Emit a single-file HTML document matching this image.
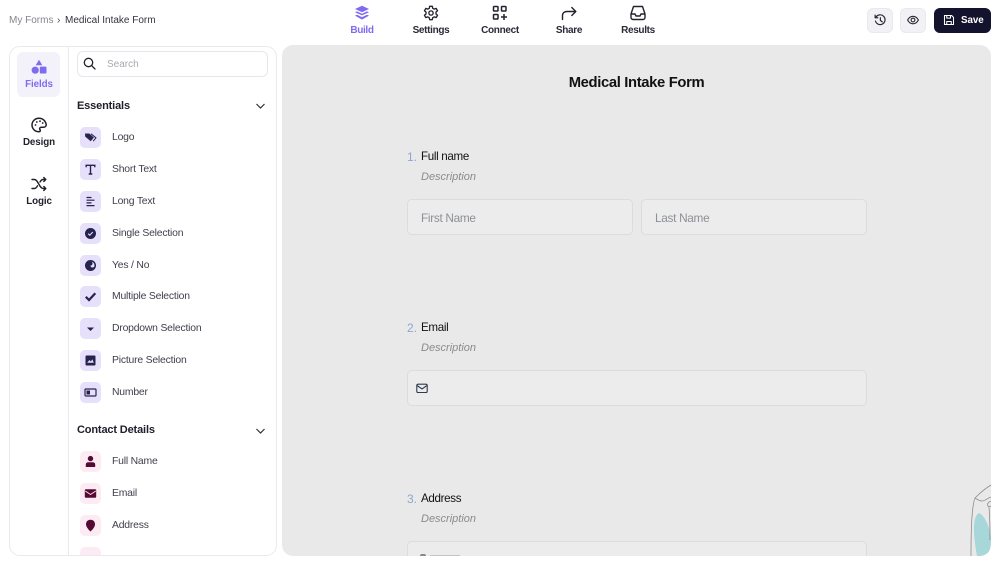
<!DOCTYPE html>
<html><head><meta charset="utf-8">
<style>
*{box-sizing:border-box;margin:0;padding:0}
html,body{width:1000px;height:564px;overflow:hidden;background:#fff;font-family:"Liberation Sans",sans-serif;color:#1f1f2e}
.a{position:absolute}
.t{position:absolute;white-space:nowrap;line-height:14px}
svg{position:absolute;display:block}
.tab{position:absolute;top:25px;font-size:10px;letter-spacing:-.33px;font-weight:700;line-height:12px;width:80px;text-align:center;color:#2a2a38}
.chip{position:absolute;left:80px;width:21px;height:21px;border-radius:5px;background:#e6e0fb}
.chip.p{background:#fdebf3}
.it{position:absolute;left:112px;font-size:10.4px;letter-spacing:-.2px;line-height:14px;color:#40404c;white-space:nowrap}
.form{color:#111;font-size:11.6px;letter-spacing:-.33px;line-height:14px;position:absolute;white-space:nowrap}
.n{color:#8ea6cf;position:absolute;font-size:12px;line-height:14px}
.d{color:#8b8b8b;font-style:italic;font-size:11px;line-height:14px;position:absolute;white-space:nowrap}
.in{position:absolute;background:#ececec;border:1px solid #dcdcdc;border-radius:5px}
.ph{position:absolute;color:#8d9096;font-size:11.8px;letter-spacing:-.3px;line-height:14px;white-space:nowrap}
.side{position:absolute;left:9px;width:60px;text-align:center;white-space:nowrap;line-height:14px;font-size:9.8px;font-weight:700;letter-spacing:-.1px;color:#22222c}
</style></head><body>

<div class="t" style="left:9px;top:13.5px;font-size:10px;color:#85858d">My Forms</div>
<div class="t" style="left:57px;top:13.5px;font-size:10px;color:#44444c">›</div>
<div class="t" style="left:65px;top:13.5px;font-size:10px;color:#33333d">Medical Intake Form</div>

<!-- top tabs -->
<svg style="left:354px;top:5px" width="16" height="16" viewBox="0 0 16 16"><path d="M8 .8 15 4 8 7.2 1 4Z" fill="#7f6bf0"/><path d="M1 7.2 3 6.4 8 8.7 13 6.4 15 7.2 8 10.4Z" fill="#7f6bf0"/><path d="M1 10.6 3 9.8 8 12.1 13 9.8 15 10.6 8 14.6Z" fill="#7f6bf0"/></svg>
<div class="tab" style="left:322px;color:#7f6bf0">Build</div>
<svg style="left:423px;top:5px" width="16" height="16" viewBox="0 0 24 24" fill="none" stroke="#22222c" stroke-width="2"><circle cx="12" cy="12" r="3.2"/><path d="M10 2h4l.6 3 2.4 1.2 2.8-1.1 2 3.5-2.3 1.9v3l2.3 1.9-2 3.5-2.8-1.1L14.600 19l-.6 3h-4l-.6-3L7 17.800l-2.800 1.100-2-3.500 2.300-1.900v-3L2.200 8.600l2-3.500L7 6.200 9.400 5z" stroke-linejoin="round"/></svg>
<div class="tab" style="left:391px">Settings</div>
<svg style="left:492px;top:5px" width="16" height="16" viewBox="0 0 16 16" fill="none" stroke="#22222c" stroke-width="1.500"><rect x="1.500" y="1.500" width="4.500" height="4.500" rx=".8"/><rect x="9.500" y="1.500" width="4.500" height="4.500" rx=".8"/><rect x="1.500" y="9.500" width="4.500" height="4.500" rx=".8"/><path d="M12 9v6M9 12h6"/></svg>
<div class="tab" style="left:460px">Connect</div>
<svg style="left:561px;top:5px" width="16" height="16" viewBox="0 0 16 16" fill="none" stroke="#22222c" stroke-width="1.400" stroke-linecap="round" stroke-linejoin="round"><path d="M1.500 14.500V10.500C1.500 7.800 3.500 6.500 6 6.500H14.500M10.800 2.500 14.800 6.500 10.800 10.500"/></svg>
<div class="tab" style="left:529px">Share</div>
<svg style="left:630px;top:5px" width="16" height="16" viewBox="0 0 16 16" fill="none" stroke="#22222c" stroke-width="1.400" stroke-linejoin="round"><path d="M3.500 1.500h9L15 9v3.500a2 2 0 0 1-2 2H3a2 2 0 0 1-2-2V9Z"/><path d="M1 9h4l1 2h4l1-2h4"/></svg>
<div class="tab" style="left:598px">Results</div>

<!-- right buttons -->
<div class="a" style="left:867px;top:8px;width:26px;height:25px;border-radius:6px;background:#f1f1f6;border:1px solid #e8e8ee"></div>
<svg style="left:874px;top:14px" width="12" height="12" viewBox="0 0 16 16" fill="none" stroke="#2a2a35" stroke-width="1.600" stroke-linecap="round" stroke-linejoin="round"><path d="M2.500 4.500A6.500 6.500 0 1 1 2 9.500M1.500 1.500v3.500H5M8.500 5v3.500l2.500 2"/></svg>
<div class="a" style="left:900px;top:8px;width:26px;height:25px;border-radius:6px;background:#f1f1f6;border:1px solid #e8e8ee"></div>
<svg style="left:907px;top:14px" width="12" height="12" viewBox="0 0 16 16" fill="none" stroke="#2a2a35" stroke-width="1.500"><path d="M.8 8C2.500 4.800 5 3 8 3s5.500 1.800 7.200 5C13.500 11.200 11 13 8 13S2.500 11.200.8 8Z"/><circle cx="8" cy="8" r="2.500"/></svg>
<div class="a" style="left:934px;top:8px;width:57px;height:25px;border-radius:6px;background:#14132e"></div>
<svg style="left:943px;top:14px" width="12" height="12" viewBox="0 0 16 16" fill="none" stroke="#fff" stroke-width="1.400" stroke-linejoin="round"><path d="M2 2h9.500L14 4.500V14H2Z"/><path d="M5 2v3.500h5V2M5 14v-4h6v4"/></svg>
<div class="t" style="left:961px;top:14px;font-size:9.800px;font-weight:700;letter-spacing:-.05px;color:#fff">Save</div>

<!-- left panel -->
<div class="a" style="left:9px;top:46px;width:268px;height:510px;background:#fff;border:1px solid #e9e9f0;border-radius:11px"></div>
<div class="a" style="left:68px;top:47px;width:1px;height:508px;background:#e9e9f0"></div>
<div class="a" style="left:17px;top:52px;width:43px;height:45px;border-radius:6px;background:#f3f2fb"></div>
<svg style="left:31px;top:59px" width="16" height="16" viewBox="0 0 16 16" fill="#7f6bf0"><path d="M8 .8 11.300 6.300H4.700Z"/><circle cx="4.200" cy="11.200" r="3.600"/><rect x="8.800" y="7.600" width="6.700" height="6.900" rx="1"/></svg>
<div class="side" style="top:77.500px;color:#7f6bf0">Fields</div>
<svg style="left:31px;top:117px" width="16" height="16" viewBox="0 0 16 16" fill="none" stroke="#1f1f2a" stroke-width="1.500"><path d="M8 1.300C4 1.300 1 4.300 1 8s3 6.700 6.700 6.700c1.700 0 1.900-1.200 1.300-2-.8-1.100-.2-2.500 1.300-2.500h2.400c1.500 0 2.500-1 2.500-2.500C14.700 4 11.800 1.300 8 1.300Z"/><circle cx="4.500" cy="8" r=".9" fill="#1f1f2a" stroke="none"/><circle cx="5.800" cy="5" r=".9" fill="#1f1f2a" stroke="none"/><circle cx="9" cy="4.200" r=".9" fill="#1f1f2a" stroke="none"/><circle cx="11.700" cy="6" r=".9" fill="#1f1f2a" stroke="none"/></svg>
<div class="side" style="top:136px">Design</div>
<svg style="left:31px;top:176px" width="16" height="16" viewBox="0 0 16 16" fill="none" stroke="#1f1f2a" stroke-width="1.400" stroke-linecap="round" stroke-linejoin="round"><path d="M1 3.500h2.500c3.500 0 5 9 8.500 9h2.500M1 12.500h2.500c1.300 0 2.200-1.200 3-2.700M9 6c.8-1.400 1.700-2.500 3-2.500h2.500M12.800 1.500l2 2-2 2M12.800 10.500l2 2-2 2"/></svg>
<div class="side" style="top:194.500px">Logic</div>

<!-- search -->
<div class="a" style="left:77px;top:51px;width:191px;height:26px;border:1px solid #e6e6ec;border-radius:6px;background:#fff"></div>
<svg style="left:83px;top:57px" width="13" height="13" viewBox="0 0 13 13" fill="none" stroke="#22222c" stroke-width="1.300" stroke-linecap="round"><circle cx="5.500" cy="5.500" r="4.200"/><path d="M8.700 8.700 12 12"/></svg>
<div class="t" style="left:107px;top:57.500px;font-size:10px;color:#a9a9b0">Search</div>

<div class="t" style="left:77px;top:99px;font-size:11px;letter-spacing:-.15px;font-weight:700;color:#20202c">Essentials</div>
<svg style="left:255px;top:102px" width="11" height="8" viewBox="0 0 11 8" fill="none" stroke="#30303a" stroke-width="1.200"><path d="M1.500 2 5.500 6 9.500 2"/></svg>

<div class="chip" style="top:127px"></div><div class="it" style="top:130.500px">Logo</div>
<svg style="left:84px;top:131px" width="13" height="13" viewBox="0 0 13 13"><path d="M1 2.500h4.300l4.600 4-3.200 3.800L1.200 5.600Z" fill="#26234f"/><path d="M7 2.800l5 4-2.800 3.400" fill="none" stroke="#26234f" stroke-width="1"/></svg>
<div class="chip" style="top:159px"></div><div class="it" style="top:162.500px">Short Text</div>
<svg style="left:84px;top:163px" width="13" height="13" viewBox="0 0 13 13" fill="none" stroke="#26234f" stroke-width="1.400"><path d="M2.200 4.200V2.300h8.600v1.900M6.500 2.300v8.700M4.700 11h3.600"/></svg>
<div class="chip" style="top:191px"></div><div class="it" style="top:194.500px">Long Text</div>
<svg style="left:84px;top:195px" width="13" height="13" viewBox="0 0 13 13" stroke="#26234f" stroke-width="1.200"><path d="M2.500 2.500h5M2.500 5.200h8M2.500 7.900h5M2.500 10.600h8"/></svg>
<div class="chip" style="top:223px"></div><div class="it" style="top:226.500px">Single Selection</div>
<svg style="left:84px;top:227px" width="13" height="13" viewBox="0 0 13 13"><circle cx="6.500" cy="6.500" r="5.500" fill="#26234f"/><path d="M4.200 6.700 5.800 8.200 8.800 5" fill="none" stroke="#e6e0fb" stroke-width="1.100"/></svg>
<div class="chip" style="top:255px"></div><div class="it" style="top:258.500px">Yes / No</div>
<svg style="left:84px;top:259px" width="13" height="13" viewBox="0 0 13 13"><circle cx="6.500" cy="6.500" r="5.500" fill="#26234f"/><path d="M6.500 2.500A4 4 0 0 1 10.500 6.500 2 2 0 0 1 6.500 6.500 2 2 0 0 0 6.500 2.500Z" fill="#e6e0fb"/></svg>
<div class="chip" style="top:286px"></div><div class="it" style="top:290px">Multiple Selection</div>
<svg style="left:84px;top:290px" width="13" height="13" viewBox="0 0 13 13" fill="none" stroke="#26234f" stroke-width="2.200"><path d="M1.800 6.800 5 10 11.300 3.200"/></svg>
<div class="chip" style="top:318px"></div><div class="it" style="top:322px">Dropdown Selection</div>
<svg style="left:84px;top:322px" width="13" height="13" viewBox="0 0 13 13"><path d="M3 5.500h7L6.500 9Z" fill="#26234f"/></svg>
<div class="chip" style="top:350px"></div><div class="it" style="top:353.500px">Picture Selection</div>
<svg style="left:84px;top:354px" width="13" height="13" viewBox="0 0 13 13"><rect x="1.500" y="1.500" width="10" height="10" rx="1" fill="#26234f"/><path d="M3.200 8.800 5.500 6l1.400 1.500L8.300 5.200 9.800 8.800Z" fill="#e6e0fb"/></svg>
<div class="chip" style="top:382px"></div><div class="it" style="top:385.500px">Number</div>
<svg style="left:84px;top:386px" width="13" height="13" viewBox="0 0 13 13"><rect x="1" y="3" width="11" height="7" rx="1" fill="none" stroke="#26234f" stroke-width="1.200"/><rect x="2.500" y="4.500" width="3.500" height="4" fill="#26234f"/></svg>

<div class="t" style="left:77px;top:423px;font-size:11px;letter-spacing:-.15px;font-weight:700;color:#20202c">Contact Details</div>
<svg style="left:255px;top:427px" width="11" height="8" viewBox="0 0 11 8" fill="none" stroke="#30303a" stroke-width="1.200"><path d="M1.500 2 5.500 6 9.500 2"/></svg>

<div class="chip p" style="top:451px"></div><div class="it" style="top:454.500px">Full Name</div>
<svg style="left:84px;top:455px" width="13" height="13" viewBox="0 0 13 13" fill="#560a33"><circle cx="6.500" cy="3.600" r="2.700"/><path d="M1.800 12V9.500C1.800 8 3 7.200 4.300 7.200h4.400c1.300 0 2.500.8 2.500 2.300V12Z"/></svg>
<div class="chip p" style="top:483px"></div><div class="it" style="top:486.500px">Email</div>
<svg style="left:84px;top:487px" width="13" height="13" viewBox="0 0 13 13"><rect x=".8" y="2.200" width="11.400" height="8.600" rx="1" fill="#560a33"/><path d="M1.200 4 6.500 7.500 11.800 4" fill="none" stroke="#fdebf3" stroke-width=".9"/></svg>
<div class="chip p" style="top:515px"></div><div class="it" style="top:518.500px">Address</div>
<svg style="left:84px;top:519px" width="13" height="13" viewBox="0 0 13 13" fill="#560a33"><path d="M6.500.8C9.300.8 11 2.800 11 5.200c0 2.700-2.500 5.300-4.500 7.300C4.500 10.500 2 7.900 2 5.200 2 2.800 3.700.8 6.500.8Z"/></svg>
<div class="a" style="left:80px;top:547px;width:21px;height:8px;border-radius:5px 5px 0 0;background:#fdebf3"></div>

<!-- form panel -->
<div class="a" style="left:282px;top:45px;width:709px;height:511px;background:#e9e9e9;border-radius:11px;overflow:hidden">
  <svg style="left:684px;top:435px" width="25" height="76" viewBox="0 0 25 76" fill="none"><path d="M13 33C9 35 8 42 8 50 8 60 10 70 11 76H20C24 72 25 66 25 60 25 50 19 35 13 33Z" fill="#a8d7d9"/><path d="M5 76C5 60 5 40 7 27 8 20 9 17 10 17 14 13 20 8 25 5M9 18C12 20 14 21 16 21 19 21 22 18 25 17M25 21C22 22 21 24 22 26 22 27 23 27 25 26M23 27C24 40 24 55 24 60" stroke="#8c8c8c" stroke-width=".8"/></svg>
</div>
<div class="t" style="left:282px;width:709px;text-align:center;top:73.500px;line-height:18px;font-size:14.800px;letter-spacing:-.35px;font-weight:700;color:#111">Medical Intake Form</div>

<div class="n" style="left:407px;top:150px">1.</div><div class="form" style="left:421px;top:150px">Full name</div>
<div class="d" style="left:421px;top:170px">Description</div>
<div class="in" style="left:407px;top:199px;width:226px;height:36px"></div>
<div class="ph" style="left:421px;top:211px">First Name</div>
<div class="in" style="left:641px;top:199px;width:226px;height:36px"></div>
<div class="ph" style="left:655px;top:211px">Last Name</div>

<div class="n" style="left:407px;top:321px">2.</div><div class="form" style="left:421px;top:321px">Email</div>
<div class="d" style="left:421px;top:341px">Description</div>
<div class="in" style="left:407px;top:370px;width:460px;height:36px"></div>
<svg style="left:416px;top:383px" width="12" height="11" viewBox="0 0 12 11" fill="none" stroke="#2f3a4e" stroke-width="1.100"><rect x=".8" y="1.200" width="10.400" height="8.300" rx="1.300"/><path d="M1 2.500 6 6 11 2.500"/></svg>

<div class="n" style="left:407px;top:492px">3.</div><div class="form" style="left:421px;top:492px">Address</div>
<div class="d" style="left:421px;top:512px">Description</div>
<div class="a" style="left:407px;top:541px;width:460px;height:15px;background:#ececec;border:1px solid #dcdcdc;border-bottom:0;border-radius:5px 5px 0 0"></div>
<div class="a" style="left:420px;top:554px;width:6px;height:2px;background:#888;border-radius:2px 2px 0 0"></div>
<div class="a" style="left:430px;top:555px;width:30px;height:1px;background:#c4c4c4"></div>

</body></html>
